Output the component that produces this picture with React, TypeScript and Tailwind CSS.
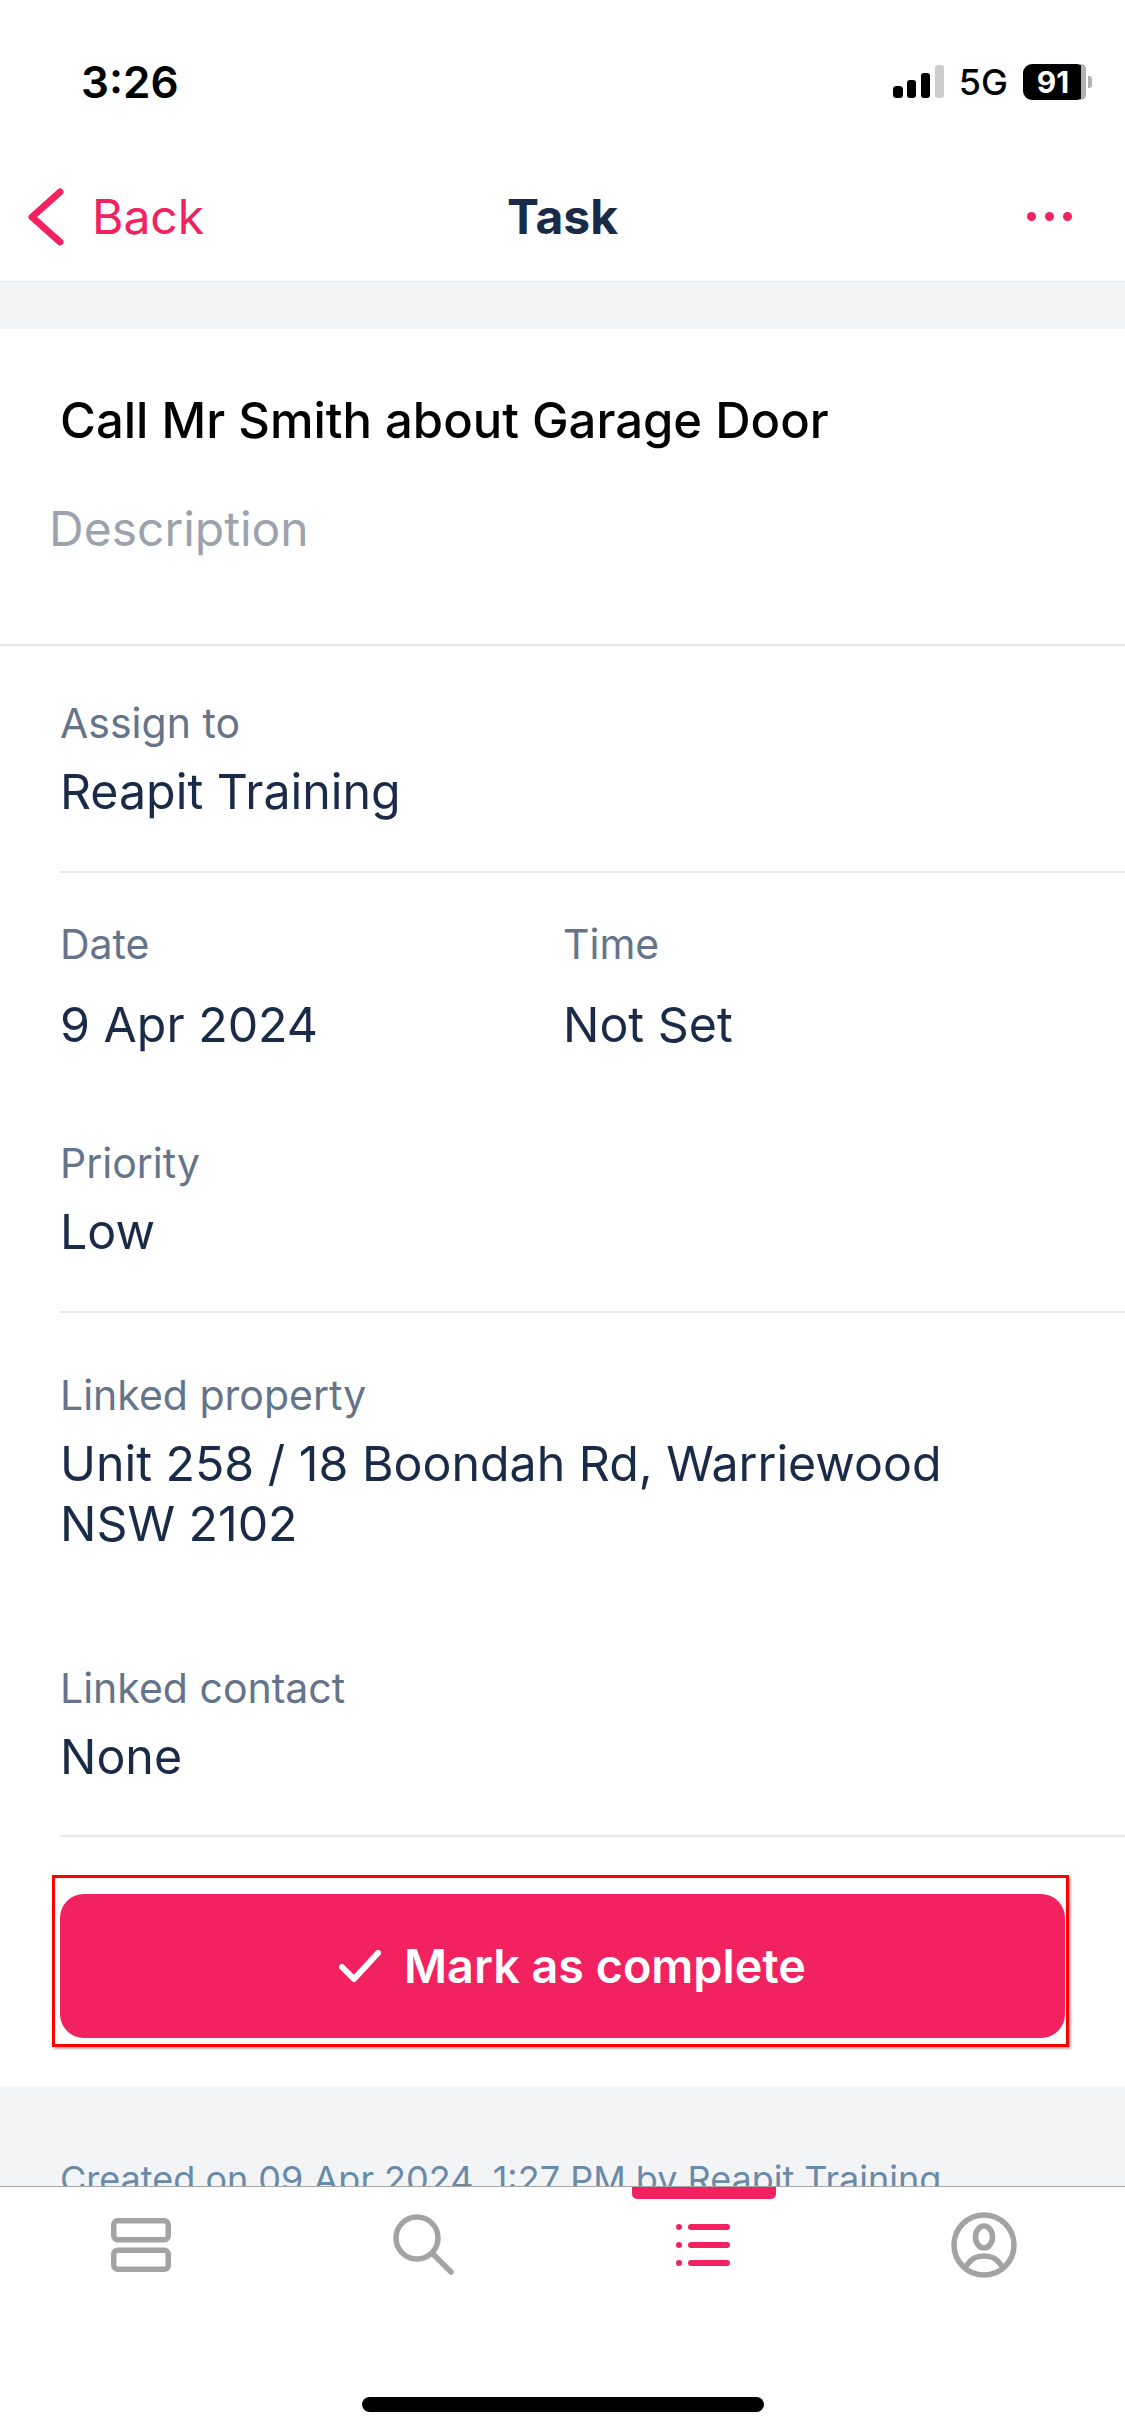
const font = "font-['Inter','Liberation_Sans',sans-serif]";

function StatusBar() {
  return (
    <div className="flex h-[130px] items-start justify-between pr-[39px] pl-[81px] pt-[57px]">
      <span className="text-[44px] leading-[50px] font-semibold text-black">3:26</span>
      <div className="flex items-center pt-[7px]">
        <svg width="52" height="34" viewBox="0 0 52 34" className="mr-[14px]">
          <rect x="0" y="21" width="10" height="12" rx="3.5" fill="#000" />
          <rect x="14" y="15" width="9" height="18" rx="3" fill="#000" />
          <rect x="28" y="8" width="9" height="25" rx="3" fill="#000" />
          <rect x="42" y="0" width="9" height="33" rx="3" fill="#ccc" />
        </svg>
        <span className="mr-[15px] text-[36px] leading-[36px] font-medium text-black">5G</span>
        <div className="relative flex h-[36px] w-[63px] items-center justify-center rounded-[9px] bg-black text-[30px] leading-none font-bold text-white">
          <span className="pr-[3px]">91</span>
          <div className="absolute top-0 right-0 h-full w-[5px] rounded-r-[9px] bg-[#b0b0b0]" />
          <div className="absolute top-[12px] right-[-6px] h-[12px] w-[4px] rounded-r-[3px] bg-[#b0b0b0]" />
        </div>
      </div>
    </div>
  );
}

function Field({ label, value, valueClass = 'mt-[15px]' }: { label: string; value: string; valueClass?: string }) {
  return (
    <div>
      <div className="text-[41px] leading-[48px] text-[#64748b]">{label}</div>
      <div className={`text-[48.3px] leading-[60.5px] text-[#1a2b47] ${valueClass}`}>{value}</div>
    </div>
  );
}

function TabBar() {
  return (
    <div className="absolute top-[2186px] right-0 left-0 h-[250px] border-t border-[#a6a6a6] bg-white">
      <div className="grid grid-cols-4 pt-[24px]">
        <div className="flex h-[68px] items-center justify-center">
          <svg width="60" height="54" viewBox="0 0 60 54" fill="none" stroke="#a3a3a3" strokeWidth="5.5">
            <rect x="2.75" y="2.75" width="54.5" height="19" rx="4" />
            <rect x="2.75" y="32.25" width="54.5" height="19" rx="4" />
          </svg>
        </div>
        <div className="flex h-[68px] items-center justify-center">
          <svg width="62" height="62" viewBox="0 0 62 62" fill="none" stroke="#a3a3a3" strokeWidth="5.5" strokeLinecap="round" className="translate-x-[2px]">
            <circle cx="24" cy="24" r="21" />
            <path d="M39.5 39.5 L58 58" />
          </svg>
        </div>
        <div className="relative flex h-[68px] items-center justify-center">
          <div className="absolute top-[-24px] left-[69px] h-[12px] w-[144px] rounded-b-[5px] bg-[#f2215f]" />
          <svg width="56" height="44" viewBox="0 0 56 44" fill="#f2215f" className="translate-x-[1px]">
            <circle cx="3" cy="4" r="3" />
            <circle cx="3" cy="22" r="3" />
            <circle cx="3" cy="40" r="3" />
            <rect x="12" y="1" width="42" height="6" rx="3" />
            <rect x="12" y="19" width="42" height="6" rx="3" />
            <rect x="12" y="37" width="42" height="6" rx="3" />
          </svg>
        </div>
        <div className="flex h-[68px] items-center justify-center">
          <svg width="66" height="66" viewBox="0 0 66 66" fill="none" stroke="#a3a3a3" strokeWidth="5.5" strokeLinecap="round">
            <circle cx="33" cy="33" r="30" />
            <ellipse cx="33" cy="25" rx="8.5" ry="11" />
            <path d="M16 53 C21 45 27 44 33 44 C39 44 45 45 50 53" />
          </svg>
        </div>
      </div>
      <div className="mx-auto mt-[118px] h-[15px] w-[402px] rounded-full bg-black" />
    </div>
  );
}

export default function App() {
  return (
    <div className={`relative h-[2436px] w-[1125px] overflow-hidden bg-[#f3f4f6] ${font}`}>
      <div className="bg-white">
        <StatusBar />
        <div className="flex h-[152px] items-center justify-between border-b border-[#e5e7eb] pt-[22px] pr-[28px] pl-[28px]">
          <div className="flex w-[300px] items-center text-[48px] text-[#f2215f]">
            <svg width="36" height="58" viewBox="0 0 36 58" fill="none" stroke="#f2215f" strokeWidth="7" strokeLinecap="round" strokeLinejoin="round">
              <path d="M32 4 L4 29 L32 54" />
            </svg>
            <span className="ml-[28px]">Back</span>
          </div>
          <span className="text-[48px] font-bold text-[#1a2b47]">Task</span>
          <div className="flex w-[300px] justify-end gap-[9px] pr-[25px]">
            <div className="size-[9px] rounded-full bg-[#f2215f]" />
            <div className="size-[9px] rounded-full bg-[#f2215f]" />
            <div className="size-[9px] rounded-full bg-[#f2215f]" />
          </div>
        </div>
      </div>

      <div className="mt-[47px] bg-white">
        <div className="h-[317px] border-b-2 border-[#e5e7eb] pt-[62px]">
          <div className="pl-[60px] text-[49px] leading-[60px] font-medium text-black">Call Mr Smith about Garage Door</div>
          <div className="mt-[48px] pl-[49px] text-[48px] leading-[60px] text-[#9ca3af]">Description</div>
        </div>

        <div className="pl-[60px]">
          <div className="border-b-2 border-[#e5e7eb] pt-[53px] pb-[48px]">
            <Field label="Assign to" value="Reapit Training" />
          </div>
          <div className="border-b-2 border-[#e5e7eb] pt-[47px] pb-[48px]">
            <div className="grid grid-cols-[503px_1fr]">
              <Field label="Date" value="9 Apr 2024" valueClass="mt-[27px]" />
              <Field label="Time" value="Not Set" valueClass="mt-[27px]" />
            </div>
            <div className="mt-[84px]">
              <Field label="Priority" value="Low" />
            </div>
          </div>
          <div className="border-b-2 border-[#e5e7eb] pt-[58px] pb-[48px]">
            <div className="pr-[140px]">
              <Field label="Linked property" value="Unit 258 / 18 Boondah Rd, Warriewood NSW 2102" />
            </div>
            <div className="mt-[109px]">
              <Field label="Linked contact" value="None" />
            </div>
          </div>
        </div>

        <div className="pt-[57px] pr-[60px] pb-[48px] pl-[60px]">
          <div className="relative flex h-[144px] items-center justify-center rounded-[24px] bg-[#f2215f] pl-[20px] text-[46.7px] font-semibold text-white">
            <div className="absolute top-[-19px] right-[-4px] bottom-[-9px] left-[-8px] border-[3px] border-[#ff0000] shadow-[2px_2px_2px_rgba(0,0,0,0.3)]" />
            <svg width="42" height="32" viewBox="0 0 42 32" fill="none" stroke="#fff" strokeWidth="6" strokeLinecap="round" strokeLinejoin="round" className="mr-[23px]">
              <path d="M3 17 L15 29 L39 3" />
            </svg>
            Mark as complete
          </div>
        </div>
      </div>

      <div className="pt-[69px] pl-[60px] text-[36px] leading-[48px] text-[#6b8aa8]">Created on 09 Apr 2024, 1:27 PM by Reapit Training</div>

      <TabBar />
    </div>
  );
}
